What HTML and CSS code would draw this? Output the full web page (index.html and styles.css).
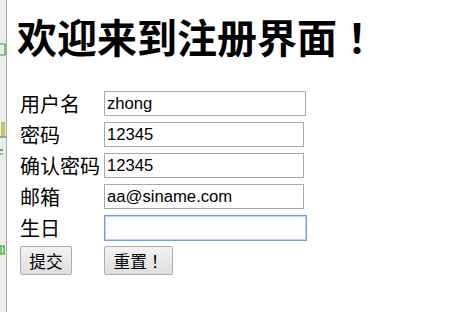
FILE: index.html
```html
<!DOCTYPE html>
<html lang="zh-CN">
<head>
  <meta charset="UTF-8">
  <title>注册</title>
  <link rel="stylesheet" href="styles.css">
</head>
<body>
  <div class="edge">
    <svg width="6" height="312">
      <path d="M0 44 H5 M5 44 V55 M0 55 H5" stroke="#2e9e2e" stroke-width="1.2" fill="none" />
      <path d="M2 122 V136 M4 122 V136" stroke="#b8a020" stroke-width="1.2" fill="none" />
      <path d="M0 137 H6" stroke="#2e9e2e" stroke-width="1.2" />
      <path d="M0 150 H3" stroke="#2e9e2e" stroke-width="1.5" />
      <path d="M0 154 H3" stroke="#2e9e2e" stroke-width="1" />
      <path d="M0 246 H5 M0 254 H5 M1 246 V254 M4 246 V254" stroke="#2e9e2e" stroke-width="1.2" fill="none" />
    </svg>
  </div>

  <div class="page">
    <h1>欢迎来到注册界面<span class="fw">！</span></h1>

    <form class="reg-form">
      <label>用户名</label>
      <input type="text" class="field wide" value="zhong">

      <label>密码</label>
      <input type="text" class="field" value="12345">

      <label>确认密码</label>
      <input type="text" class="field" value="12345">

      <label>邮箱</label>
      <input type="text" class="field" value="aa@siname.com">

      <label>生日</label>
      <input type="text" class="field wide focused" value="">

      <div class="btn-cell"><button type="submit" class="btn">提交</button></div>
      <div class="btn-cell"><button type="reset" class="btn reset">重置<span class="fw">！</span></button></div>
    </form>
  </div>
</body>
</html>
```

FILE: styles.css
```css
body {
  margin: 0;
  background: white;
  display: flex;
  height: 312px;
  overflow: hidden;
  font-family: "Noto Sans CJK SC", sans-serif;
}

.edge {
  width: 6px;
  background: #ececec;
  border-right: 1px solid #a8a8a8;
  flex-shrink: 0;
}

.edge svg {
  display: block;
}

.page {
  padding: 12px 10px 0 10px;
}

h1 {
  margin: 0 0 31px 0;
  font-size: 40px;
  line-height: 48px;
  font-weight: bold;
  color: #000;
  white-space: nowrap;
}

/* full-width exclamation: a centred mark in a 1em box */
.fw {
  display: inline-block;
  width: 1em;
  text-align: center;
  font-family: "Noto Sans CJK TC", sans-serif;
  text-spacing-trim: space-all;
}

.reg-form {
  display: grid;
  grid-template-columns: 80px auto;
  grid-auto-rows: 25px;
  column-gap: 4px;
  row-gap: 6px;
  padding-left: 3px;
  align-items: center;
}

.reg-form label {
  font-size: 20px;
  line-height: 25px;
  color: #000;
  white-space: nowrap;
}

.field {
  box-sizing: border-box;
  width: 200px;
  height: 25px;
  margin: 0;
  padding: 0 2px;
  border: 1px solid #a9a9a9;
  font-family: "Liberation Sans", Arial, sans-serif;
  font-size: 16.67px;
  color: #000;
  outline: none;
}

.field.wide {
  width: 202px;
}

.field.focused {
  width: 203px;
  height: 26px;
  border-color: #6f9ee8;
  box-shadow: 0 0 0 1px #b9d2f6 inset;
}

.btn-cell {
  align-self: start;
}

.btn {
  box-sizing: border-box;
  width: 52px;
  height: 29px;
  margin: 0;
  padding: 0;
  font-family: "Noto Sans CJK SC", sans-serif;
  font-size: 16.67px;
  color: #000;
  background: linear-gradient(#f3f3f3, #dedede);
  border: 1px solid #adadad;
  border-radius: 2px;
  white-space: nowrap;
}

.btn.reset {
  width: 69px;
}
```
